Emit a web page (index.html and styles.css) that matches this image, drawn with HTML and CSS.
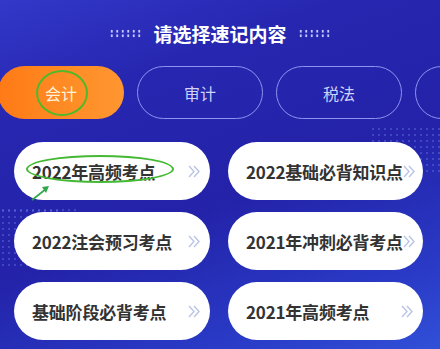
FILE: index.html
```html
<!DOCTYPE html>
<html lang="zh">
<head>
<meta charset="utf-8">
<link rel="stylesheet" href="styles.css">
</head>
<body>
<div class="page">
  <div class="deco deco-a"></div>
  <div class="deco deco-b"></div>
  <div class="deco deco-c"></div>
  <header class="head">
    <span class="dots"></span>
    <h1 class="title">请选择速记内容</h1>
    <span class="dots"></span>
  </header>
  <nav class="tabs">
    <div class="tab active"><span class="tab-label">会计<span class="ring"></span></span></div>
    <div class="tab">审计</div>
    <div class="tab">税法</div>
    <div class="tab"></div>
  </nav>
  <section class="cards">
    <div class="card"><span class="card-text">2022年高频考点<span class="oval"></span></span><svg class="chev" width="12" height="13" viewBox="0 0 12 13"><path d="M1 1 L6 6.5 L1 12 M6 1 L11 6.5 L6 12" fill="none" stroke="#b9c4e6" stroke-width="1.4"/></svg>
      <svg class="arrow" width="20" height="16" viewBox="0 0 20 16"><path d="M1 15 L15 4" stroke="#2fa84a" stroke-width="1.6" fill="none"/><path d="M11 2 L18 1 L15 8 Z" fill="#2fa84a"/></svg>
    </div>
    <div class="card"><span class="card-text">2022基础必背知识点</span><svg class="chev" width="12" height="13" viewBox="0 0 12 13"><path d="M1 1 L6 6.5 L1 12 M6 1 L11 6.5 L6 12" fill="none" stroke="#b9c4e6" stroke-width="1.4"/></svg></div>
    <div class="card"><span class="card-text">2022注会预习考点</span><svg class="chev" width="12" height="13" viewBox="0 0 12 13"><path d="M1 1 L6 6.5 L1 12 M6 1 L11 6.5 L6 12" fill="none" stroke="#b9c4e6" stroke-width="1.4"/></svg></div>
    <div class="card"><span class="card-text">2021年冲刺必背考点</span><svg class="chev" width="12" height="13" viewBox="0 0 12 13"><path d="M1 1 L6 6.5 L1 12 M6 1 L11 6.5 L6 12" fill="none" stroke="#b9c4e6" stroke-width="1.4"/></svg></div>
    <div class="card"><span class="card-text">基础阶段必背考点</span><svg class="chev" width="12" height="13" viewBox="0 0 12 13"><path d="M1 1 L6 6.5 L1 12 M6 1 L11 6.5 L6 12" fill="none" stroke="#b9c4e6" stroke-width="1.4"/></svg></div>
    <div class="card"><span class="card-text">2021年高频考点</span><svg class="chev" width="12" height="13" viewBox="0 0 12 13"><path d="M1 1 L6 6.5 L1 12 M6 1 L11 6.5 L6 12" fill="none" stroke="#b9c4e6" stroke-width="1.4"/></svg></div>
  </section>
</div>
</body>
</html>
```

FILE: styles.css
```css
* { box-sizing: border-box; margin: 0; padding: 0; }
html, body { width: 440px; height: 349px; overflow: hidden; }
body {
  font-family: "Noto Sans CJK SC", "Noto Sans", sans-serif;
}
.page {
  position: relative;
  width: 440px;
  height: 349px;
  overflow: hidden;
  background: linear-gradient(160deg, #3338c8 0%, #2626b0 25%, #2322a8 55%, #2a3cc8 85%, #3150d8 100%);
}
.deco {
  position: absolute;
  background-image: radial-gradient(circle, rgba(140,160,255,0.28) 0.9px, transparent 1.3px);
  background-size: 6px 6px;
}
.deco-a { left: 370px; top: 126px; width: 70px; height: 50px; }
.deco-b { left: 0; top: 208px; width: 60px; height: 60px; }
.deco-c { left: 0; top: 207px; width: 80px; height: 4px; }
.head {
  height: 66px;
  display: flex;
  align-items: center;
  justify-content: center;
  gap: 11px;
}
.title {
  font-size: 19px;
  font-weight: 700;
  color: #ffffff;
  line-height: 1;
}
.dots {
  width: 33px;
  height: 9px;
  background-image: radial-gradient(circle, #c2c8ff 1px, transparent 1.4px);
  background-size: 5.5px 4.5px;
}
.tabs {
  display: flex;
  gap: 13px;
  margin-left: -2px;
  height: 53px;
}
.tab {
  flex: 0 0 126px;
  height: 53px;
  border-radius: 27px;
  border: 1.5px solid #8f93f2;
  color: #cfd2f7;
  font-size: 16px;
  display: flex;
  align-items: center;
  justify-content: center;
}
.tab.active {
  border: none;
  background: linear-gradient(90deg, #ff7a16 0%, #ff8d26 60%, #ff9631 100%);
  color: #fff3dc;
}
.tab-label { position: relative; }
.ring {
  position: absolute;
  left: -9px;
  top: -11px;
  width: 52px;
  height: 46px;
  border: 2.6px solid #52b82a;
  border-radius: 50%;
}
.cards {
  display: grid;
  grid-template-columns: 196px 195px;
  column-gap: 18px;
  row-gap: 12px;
  padding-left: 14px;
  margin-top: 23px;
}
.card {
  position: relative;
  height: 58px;
  border-radius: 29px;
  background: #ffffff;
  display: flex;
  align-items: center;
  padding-left: 18px;
  padding-right: 10px;
}
.card-text {
  position: relative;
  font-size: 17px;
  font-weight: 700;
  color: #333333;
  white-space: nowrap;
  flex: 1;
  letter-spacing: -0.2px;
}
.chev {
  flex: 0 0 auto;
  margin-top: 1px;
}
.oval {
  position: absolute;
  left: -6px;
  top: -4px;
  width: 148px;
  height: 28px;
  border: 2px solid #45b935;
  border-radius: 50%;
}
.arrow {
  position: absolute;
  left: 17px;
  top: 43px;
}
```
